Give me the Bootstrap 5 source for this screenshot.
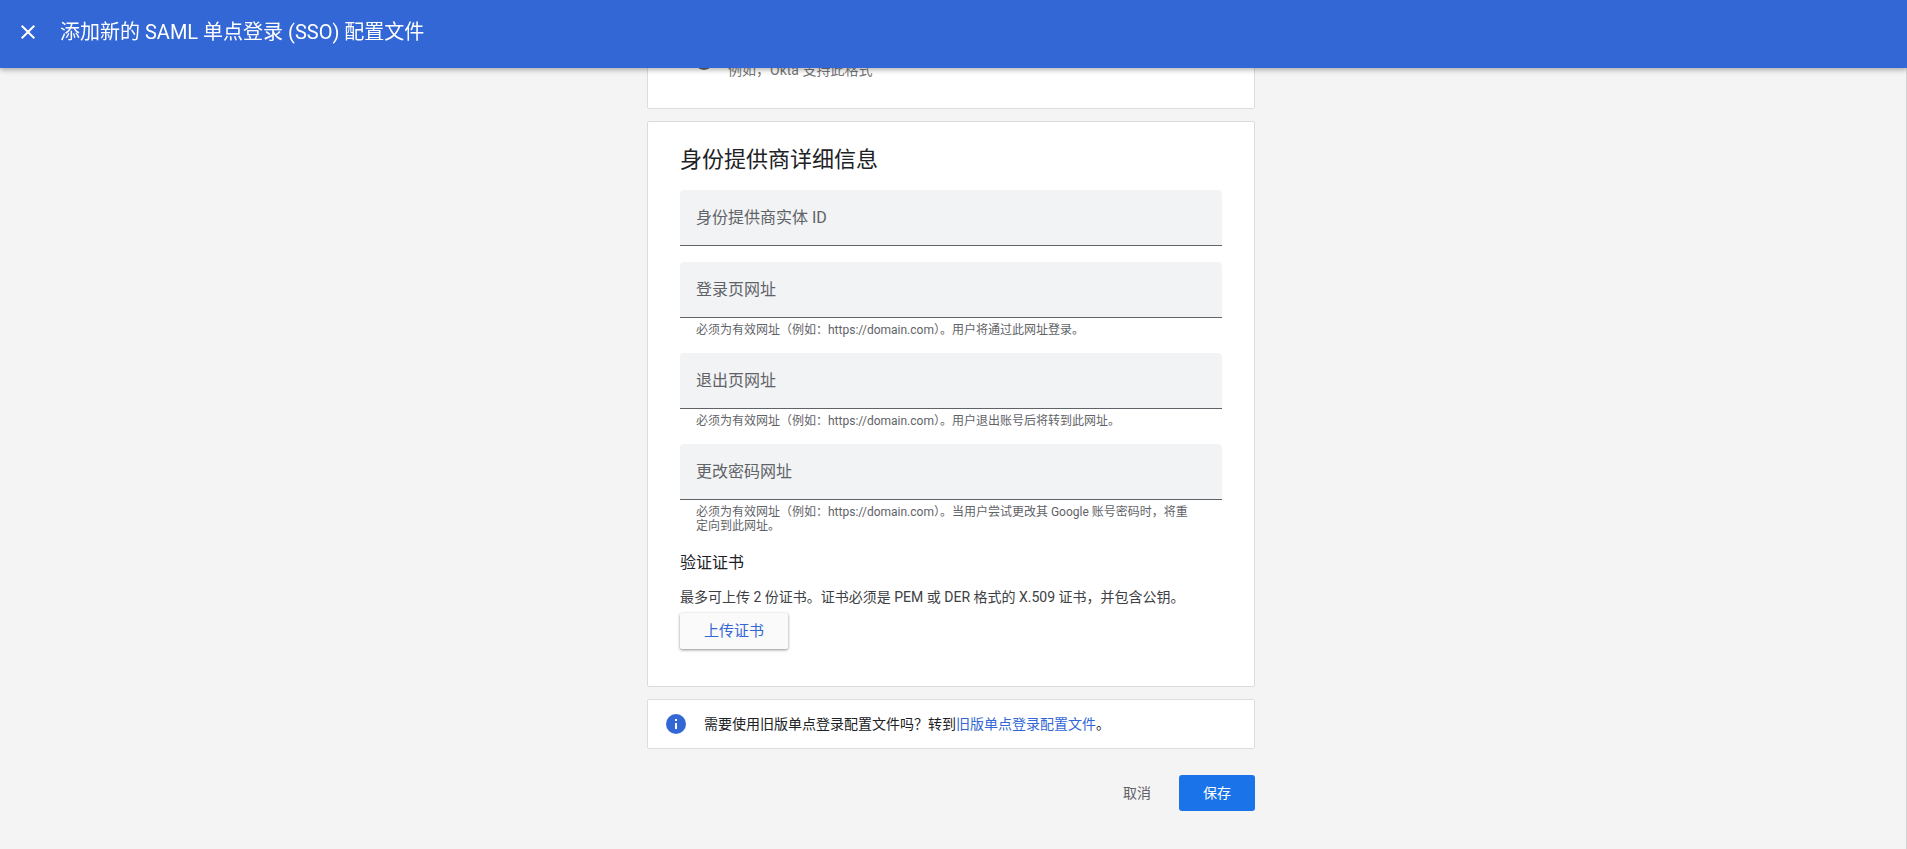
<!DOCTYPE html>
<html lang="zh-CN">
<head>
<meta charset="utf-8">
<meta name="viewport" content="width=device-width, initial-scale=1">
<title>添加新的 SAML 单点登录 (SSO) 配置文件</title>
<link href="https://cdn.jsdelivr.net/npm/bootstrap@5.3.0/dist/css/bootstrap.min.css" rel="stylesheet">
<style>
  body {
    font-family: Roboto, "Noto Sans CJK SC", sans-serif;
    font-size: 14px;
    line-height: 20px;
    color: #202124;
    background: #f4f4f4;
    border-right: 1px solid #d4d4d4;
    padding-right: 4px;
  }
  .app-bar {
    height: 68px;
    padding: 0 16px 4px;
    background: #3367d6;
    box-shadow: 0 2px 5px rgba(0, 0, 0, .3);
  }
  .app-bar h1 { font-size: 20px; line-height: 28px; font-weight: 400; }
  .close-btn { width: 24px; height: 24px; }
  .page { max-width: 608px; padding-top: 25px; padding-bottom: 24px; }
  .panel { border: 1px solid #dadce0; border-radius: 2px; background: #fff; }
  .panel-format { padding: 24px 46px 28px; }
  .format-option { gap: 14px; }
  .format-option label { margin-top: 10px; }
  .format-radio { width: 20px; height: 20px; border: 2px solid #5f6368; }
  .muted { color: #757575; }
  .panel-idp { padding: 22px 32px 37px; }
  .panel-idp h2 { font-size: 22px; line-height: 32px; font-weight: 400; margin-bottom: 14px; }
  .panel-idp h3 { font-size: 16px; line-height: 24px; font-weight: 400; padding-top: 2px; }
  .field { margin-bottom: 16px; }
  .field .form-control {
    height: 56px;
    min-height: 56px;
    padding: 20px 16px 8px;
    font-size: 16px;
    line-height: 24px;
    border: 0;
    border-bottom: 1px solid #5f6368;
    border-radius: 4px 4px 0 0;
    background: #f1f3f4;
  }
  .field .form-floating > label {
    padding: 16px;
    border: 0;
    font-size: 16px;
    line-height: 24px;
    color: #5f6368;
  }
  .hint { padding: 5px 24px 0 16px; font-size: 12px; line-height: 14px; color: #5f6368; }
  .cert-note { color: #3c4043; margin: 12px 0 6px; }
  .upload-btn {
    height: 36px;
    padding: 0 24px;
    font-size: 15px;
    line-height: 20px;
    color: #3367d6;
    background: #fafafa;
    border: 0;
    border-radius: 2px;
    box-shadow: 0 1px 3px rgba(0, 0, 0, .45);
  }
  .panel-info { gap: 18px; margin-top: 12px; padding: 14px 18px; }
  .panel-info a { color: #3367d6; }
  .actions { margin-top: 26px; }
  .action-btn { height: 36px; padding: 0 24px; font-size: 14px; line-height: 20px; border: 0; border-radius: 3px; }
  .cancel-btn { color: #5f6368; padding: 0 4px; }
  .save-btn { color: #fff; background: #1a73e8; }
</style>
</head>
<body class="min-vh-100">

<header class="app-bar fixed-top d-flex align-items-center text-white">
  <button type="button" class="close-btn btn p-0 border-0 text-white d-flex" aria-label="关闭">
    <svg width="24" height="24" viewBox="0 0 24 24" fill="currentColor"><path d="M19 6.41 17.59 5 12 10.59 6.41 5 5 6.41 10.59 12 5 17.59 6.41 19 12 13.41 17.59 19 19 17.59 13.41 12z"/></svg>
  </button>
  <h1 class="mb-0 ms-3 ps-1">添加新的 SAML 单点登录 (SSO) 配置文件</h1>
</header>

<main class="page mx-auto d-flex flex-column">
  <section class="panel panel-format mb-2">
    <div class="format-option d-flex align-items-start">
      <input class="form-check-input format-radio m-0" type="radio" id="format-okta" name="format">
      <label class="muted" for="format-okta">例如，Okta 支持此格式</label>
    </div>
  </section>

  <section class="panel panel-idp mt-1">
    <h2>身份提供商详细信息</h2>

    <div class="field">
      <div class="form-floating">
        <input type="text" class="form-control shadow-none" id="entity-id" placeholder=" ">
        <label for="entity-id">身份提供商实体 ID</label>
      </div>
    </div>

    <div class="field">
      <div class="form-floating">
        <input type="url" class="form-control shadow-none" id="login-url" placeholder=" " aria-describedby="login-hint">
        <label for="login-url">登录页网址</label>
      </div>
      <div class="hint" id="login-hint">必须为有效网址（例如：https://domain.com）。用户将通过此网址登录。</div>
    </div>

    <div class="field">
      <div class="form-floating">
        <input type="url" class="form-control shadow-none" id="logout-url" placeholder=" " aria-describedby="logout-hint">
        <label for="logout-url">退出页网址</label>
      </div>
      <div class="hint" id="logout-hint">必须为有效网址（例如：https://domain.com）。用户退出账号后将转到此网址。</div>
    </div>

    <div class="field">
      <div class="form-floating">
        <input type="url" class="form-control shadow-none" id="password-url" placeholder=" " aria-describedby="password-hint">
        <label for="password-url">更改密码网址</label>
      </div>
      <div class="hint" id="password-hint">必须为有效网址（例如：https://domain.com）。当用户尝试更改其 Google 账号密码时，将重定向到此网址。</div>
    </div>

    <h3 class="mb-0">验证证书</h3>
    <p class="cert-note">最多可上传 2 份证书。证书必须是 PEM 或 DER 格式的 X.509 证书，并包含公钥。</p>
    <button type="button" class="btn upload-btn">上传证书</button>
  </section>

  <section class="panel panel-info d-flex align-items-center">
    <svg class="flex-shrink-0" width="20" height="20" viewBox="0 0 20 20" aria-hidden="true"><circle cx="10" cy="10" r="10" fill="#3367d6"/><path d="M9 5h2v2H9zM9 9h2v6H9z" fill="#fff"/></svg>
    <p class="mb-0">需要使用旧版单点登录配置文件吗？转到<a href="#" class="text-decoration-none">旧版单点登录配置文件</a>。</p>
  </section>

  <div class="d-flex justify-content-end gap-4 actions">
    <button type="button" class="btn action-btn cancel-btn">取消</button>
    <button type="button" class="btn action-btn save-btn">保存</button>
  </div>
</main>

<script src="https://cdn.jsdelivr.net/npm/bootstrap@5.3.0/dist/js/bootstrap.bundle.min.js"></script>
</body>
</html>
